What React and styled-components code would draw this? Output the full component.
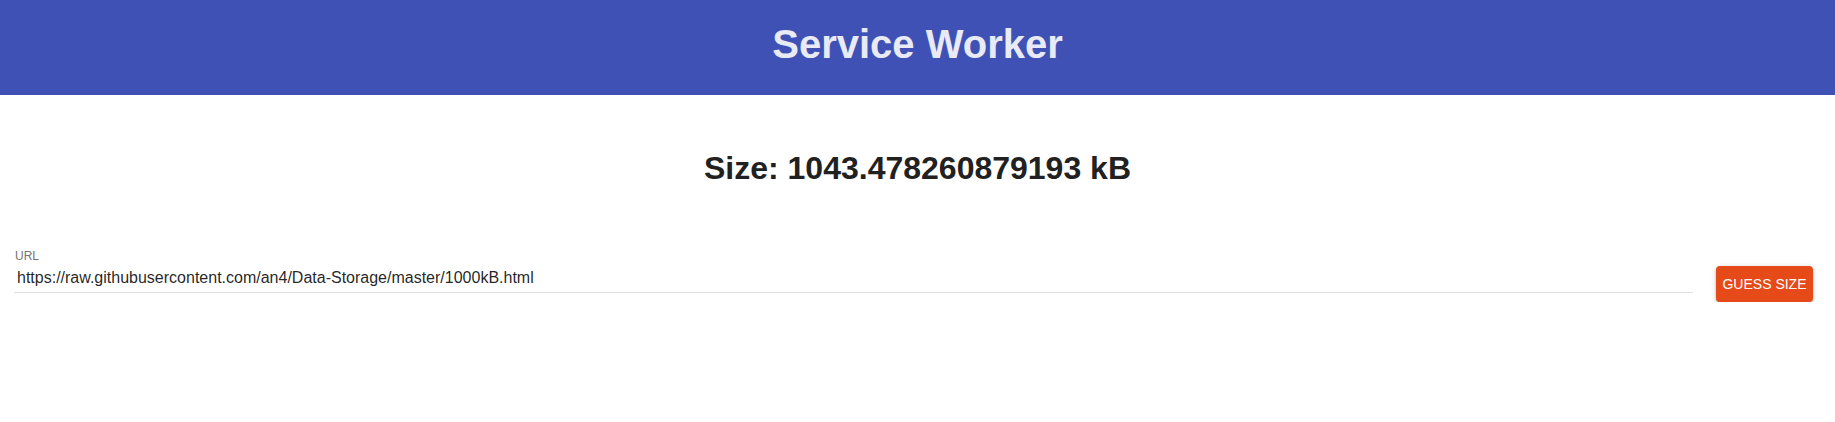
import React from "react";
import styled, { createGlobalStyle } from "styled-components";

const Global = createGlobalStyle`
  html, body { margin: 0; padding: 0; background: #ffffff; }
  body { font-family: "Liberation Sans", Arial, sans-serif; }
`;

const Header = styled.header`
  height: 95px;
  background: #3f51b5;
  display: flex;
  align-items: flex-start;
  justify-content: center;
  box-sizing: border-box;
`;

const Title = styled.h1`
  margin: 0;
  font-family: "Liberation Sans", Arial, sans-serif;
  font-weight: 700;
  font-size: 40px;
  line-height: 88px;
  color: #e8eaf6;
`;

const Main = styled.main`
  display: flex;
  flex-direction: column;
`;

const SizeHeading = styled.h2`
  margin: 55px 0 0;
  text-align: center;
  font-family: "Liberation Sans", Arial, sans-serif;
  font-weight: 700;
  font-size: 32px;
  line-height: 37px;
  color: #212121;
`;

const Row = styled.div`
  display: flex;
  align-items: flex-start;
  gap: 23px;
  padding: 0 22px 0 14px;
  margin-top: 62px;
`;

const Field = styled.label`
  flex: 1;
  display: flex;
  flex-direction: column;
  font-family: "Liberation Sans", Arial, sans-serif;
`;

const FieldLabel = styled.span`
  font-size: 12px;
  line-height: 14px;
  color: #757575;
  padding-left: 1px;
`;

const Input = styled.input`
  margin-top: 3px;
  height: 27px;
  box-sizing: border-box;
  border: none;
  border-bottom: 1px solid #e0e0e0;
  padding: 3px 0 5px 3px;
  font-family: "Liberation Sans", Arial, sans-serif;
  font-size: 16px;
  line-height: 18px;
  color: rgba(0, 0, 0, 0.87);
  background: transparent;
  outline: none;
`;

const Button = styled.button`
  margin-top: 17px;
  height: 36px;
  width: 97px;
  padding: 0;
  border: none;
  border-radius: 4px;
  background: #e64a19;
  color: #ffffff;
  font-family: "Liberation Sans", Arial, sans-serif;
  font-size: 14px;
  font-weight: 400;
  text-transform: uppercase;
  cursor: pointer;
  box-shadow: 0 1px 5px rgba(0, 0, 0, 0.2), 0 2px 2px rgba(0, 0, 0, 0.14),
    0 3px 1px -2px rgba(0, 0, 0, 0.12);
`;

export default function App() {
  return (
    <>
      <Global />
      <Header>
        <Title>Service Worker</Title>
      </Header>
      <Main>
        <SizeHeading>Size: 1043.478260879193 kB</SizeHeading>
        <Row>
          <Field>
            <FieldLabel>URL</FieldLabel>
            <Input
              defaultValue="https://raw.githubusercontent.com/an4/Data-Storage/master/1000kB.html"
            />
          </Field>
          <Button>Guess size</Button>
        </Row>
      </Main>
    </>
  );
}
